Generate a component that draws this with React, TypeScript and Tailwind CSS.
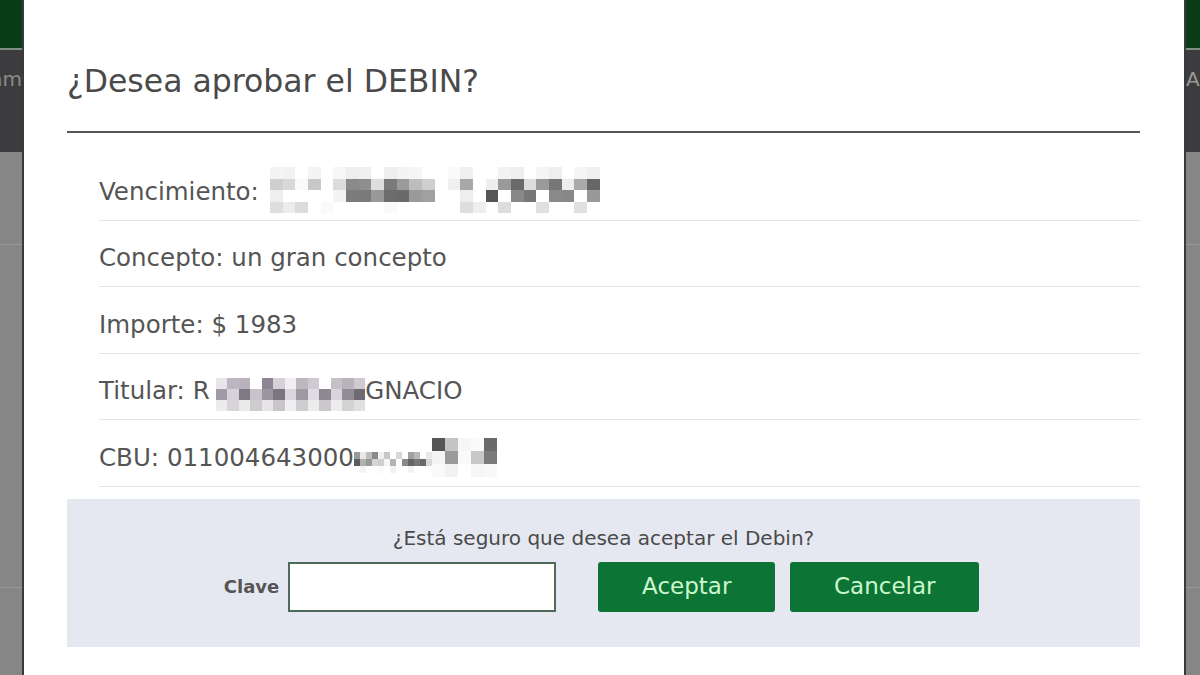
import React from "react";

type Row = string[];

function Mosaic({ rows, w, h, className = "" }: { rows: Row[]; w: number; h: number; className?: string }) {
  return (
    <span className={"inline-flex flex-col " + className}>
      {rows.map((r, i) => (
        <span key={i} className="flex">
          {r.map((c, j) => (
            <span key={j} style={{ width: w, height: h, background: c }} className="block" />
          ))}
        </span>
      ))}
    </span>
  );
}

const vencRows: Row[] = [
  ["#f4f4f4","#f2f2f2","#fff","#f4f4f4","#fff","#f6f6f6","#eee","#f0f0f0","#fff","#eee","#f3f3f3","#f5f5f5","#fff","#fff","#fafafa","#f0f0f0","#fff","#fff","#f2f2f2","#eee","#fff","#f5f5f5","#eee","#fff","#f5f5f5","#f0f0f0"],
  ["#cfcfcf","#d8d8d8","#fafafa","#c8c8c8","#fff","#dcdcdc","#8a8a8a","#8e8e8e","#dedede","#7a7a7a","#9a9a9a","#bdbdbd","#cfcfcf","#fff","#f0f0f0","#a8a8a8","#fff","#eee","#9a9a9a","#6a6a6a","#dcdcdc","#9a9a9a","#777","#eee","#aaa","#666"],
  ["#eee","#fff","#fff","#fff","#fff","#f4f4f4","#7c7c7c","#7a7a7a","#999","#6c6c6c","#6a6a6a","#9a9a9a","#a0a0a0","#fff","#fff","#eee","#fff","#555","#fff","#888","#777","#fff","#8a8a8a","#888","#fff","#999"],
  ["#dedede","#ececec","#dcdcdc","#fff","#fafafa","#fff","#fff","#fff","#fff","#fafafa","#fff","#fff","#fff","#fff","#fff","#dedede","#eee","#fff","#ddd","#fff","#fff","#e0e0e0","#fff","#fff","#e0e0e0","#fff"],
];

const titRows: Row[] = [
  ["#e8e4ea","#bdb5c2","#b9b2bc","#fff","#8d8593","#d6d0d8","#f0eef0","#bdb8c0","#cfcad2","#fff","#c6c0c6","#b9b3bb","#d0cad0"],
  ["#a19aa8","#d6d2d8","#7e7a84","#c8c2ca","#9a959e","#7a757e","#dad6dc","#9e98a2","#e0dce2","#8e8890","#d9d4da","#928c94","#6f6a72"],
  ["#ececec","#d8d4da","#eaeaea","#cfcbd0","#e6e4e6","#c9c5ca","#efefef","#d0cdd2","#ececec","#cbc7cc","#ededed","#d5d2d6","#e2dfe2"],
];

const cbuSmall: Row[] = [
  ["#9a9a9a","#e8e8e8","#bdbdbd","#8a8a8a","#f0f0f0","#c8c8c8","#fff","#d8d8d8","#fff","#a0a0a0","#b8b8b8","#fff","#e8e8e8"],
  ["#5c5c5c","#b0b0b0","#9a9a9a","#d4d4d4","#cfcfcf","#f6f6f6","#b4b4b4","#fff","#8a8a8a","#666","#777","#6a6a6a","#d8d8d8"],
  ["#fff","#f4f4f4","#fff","#fff","#fafafa","#fff","#f2f2f2","#fff","#fff","#f4f4f4","#fff","#fff","#fff"],
];

const cbuBig: Row[] = [
  ["#565656","#c4c4c4","#f6f6f6","#fafafa","#6a6a6a"],
  ["#f4f4f4","#9a9a9a","#fafafa","#c8c8c8","#7a7a7a"],
  ["#fafafa","#f2f2f2","#fff","#f6f6f6","#f8f8f8"],
];

function Item({ children }: { children: React.ReactNode }) {
  return (
    <div className="h-[66.5px] pt-[11px] flex items-center border-b border-[#e4e4e4] text-[24.5px] text-[#555] whitespace-nowrap">
      {children}
    </div>
  );
}

export default function App() {
  return (
    <div
      className="w-[1200px] h-[675px] overflow-hidden flex bg-[#878787]"
      style={{ fontFamily: '"DejaVu Sans", Verdana, sans-serif' }}
    >
      {/* left background strip */}
      <div className="w-[22px] flex flex-col shrink-0">
        <div className="h-[48px] bg-[#0a3d17]" />
        <div className="h-[2px] bg-[#7d8f80]" />
        <div className="h-[102px] bg-[#3c3c3e] text-[#8a8a8a] text-[20px] leading-[58px] overflow-hidden whitespace-nowrap flex justify-end">am</div>
        <div className="h-[93px] bg-[#868686] border-b border-[#9a9a9a]" />
        <div className="h-[343px] bg-[#868686] border-b border-[#9a9a9a]" />
        <div className="flex-1 bg-[#868686]" />
      </div>
      <div className="w-[2px] bg-[#3a3a3a] shrink-0" />

      {/* modal */}
      <div className="w-[1160px] shrink-0 bg-white pl-[43px] pr-[44px]">
        <div className="h-[133px] border-b-2 border-[#555] flex items-start pt-[62px]">
          <h1 className="text-[31.5px] leading-[38px] text-[#4a4a4a]">¿Desea aprobar el DEBIN?</h1>
        </div>
        <div className="pl-[32px] pt-[21px]">
          <Item>
            <span>Vencimiento:</span>
            <span className="ml-[11px] inline-flex -mt-[4px]"><Mosaic rows={vencRows} w={12.7} h={11.5} /></span>
          </Item>
          <Item>Concepto: un gran concepto</Item>
          <Item>Importe: $ 1983</Item>
          <Item>
            <span>Titular: R</span>
            <Mosaic rows={titRows} w={11.5} h={11} className="ml-[6px] mt-[6px]" />
            <span>GNACIO</span>
          </Item>
          <Item>
            <span>CBU: 011004643000</span>
            <Mosaic rows={cbuSmall} w={6} h={7} className="mt-[8px]" />
            <Mosaic rows={cbuBig} w={13} h={13} className="-mt-[2px]" />
          </Item>
        </div>
        <div className="mt-[12px] h-[148px] bg-[#e6e8f1] flex flex-col items-center pt-[26px]">
          <div className="text-[20px] leading-[26px] text-[#4a4a4a]">¿Está seguro que desea aceptar el Debin?</div>
          <div className="mt-[11px] mr-[4px] flex items-center">
            <label className="text-[18px] font-bold text-[#555] mr-[9px]">Clave</label>
            <input className="w-[268px] h-[50px] bg-white border-2 border-[#4e6b58] outline-none" />
            <button className="ml-[42px] w-[177px] h-[50px] rounded-[3px] bg-[#0c7434] text-[#cdf7cd] text-[23px]">Aceptar</button>
            <button className="ml-[15px] w-[189px] h-[50px] rounded-[3px] bg-[#0c7434] text-[#cdf7cd] text-[23px]">Cancelar</button>
          </div>
        </div>
      </div>

      <div className="w-[2px] bg-[#3a3a3a] shrink-0" />
      {/* right background strip */}
      <div className="flex-1 flex flex-col">
        <div className="h-[48px] bg-[#0a3d17]" />
        <div className="h-[2px] bg-[#7d8f80]" />
        <div className="h-[102px] bg-[#3c3c3e] text-[#9a9a9a] text-[20px] leading-[58px] overflow-hidden whitespace-nowrap">Ac</div>
        <div className="h-[93px] bg-[#868686] border-b border-[#9a9a9a]" />
        <div className="h-[343px] bg-[#868686] border-b border-[#9a9a9a]" />
        <div className="flex-1 bg-[#868686]" />
      </div>
    </div>
  );
}
